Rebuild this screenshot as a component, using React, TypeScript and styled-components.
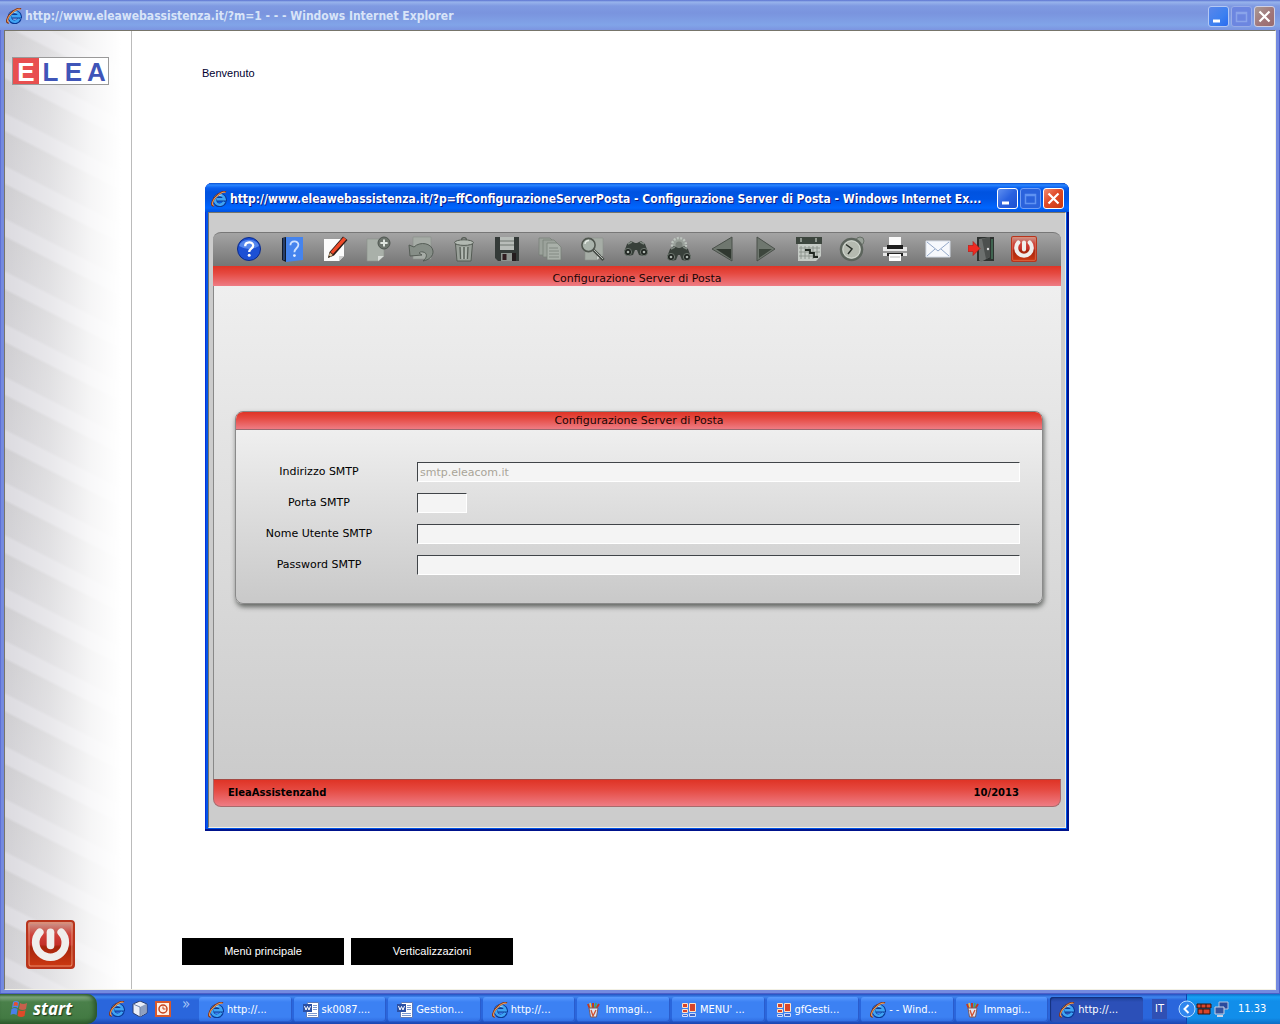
import React from "react";
import styled, { createGlobalStyle, css } from "styled-components";

const Global = createGlobalStyle`
  * { box-sizing: border-box; }
  html, body { margin: 0; padding: 0; }
  button, input { font: inherit; margin: 0; }
`;

const verdana = `Verdana, "DejaVu Sans", sans-serif`;
const arial = `Arial, "Liberation Sans", sans-serif`;
const tahoma = `Tahoma, "DejaVu Sans Condensed", "DejaVu Sans", sans-serif`;
const trebuchet = `"Trebuchet MS", "Noto Sans", sans-serif`;
const caption = `"Trebuchet MS", "DejaVu Sans Condensed", sans-serif`;

const Desktop = styled.div`
  position: relative;
  display: flex;
  flex-direction: column;
  min-height: 100vh;
  background: #fff;
`;

/* ---------- window frame ---------- */

const Frame = styled.section<{ $active?: boolean }>`
  display: flex;
  flex-direction: column;
  overflow: hidden;
  ${(p) =>
    p.$active
      ? css`
          position: absolute;
          top: 183px;
          bottom: 193px;
          left: 205px;
          right: 211px;
          border-radius: 7px 7px 0 0;
          background: #0053e8;
          padding: 0 3px 3px;
          box-shadow: inset -1px -1px 0 1px #00138c, inset 1px 0 0 #0831d9;
        `
      : css`
          flex: 1;
          background: #748ae0;
          padding: 0 4px 4px;
          box-shadow: inset -1px -1px 0 #4e5fc8, inset 1px 0 0 #5e70d4;
        `}
`;

const TitleBar = styled.header<{ $active?: boolean }>`
  display: flex;
  align-items: center;
  flex: none;
  gap: 3px;
  height: ${(p) => (p.$active ? 29 : 30)}px;
  margin: ${(p) => (p.$active ? "0 -3px" : "0 -4px")};
  padding: 2px 5px 0 6px;
  color: ${(p) => (p.$active ? "#fff" : "#d8e4f8")};
  text-shadow: ${(p) => (p.$active ? "1px 1px 0 #0a1883" : "none")};
  background: ${(p) =>
    p.$active
      ? "linear-gradient(#0a4fd0 0, #2a86ff 2px, #0a5fee 5px, #0053e0 9px, #0055e5 16px, #0066ff 25px, #0050dd 29px)"
      : "linear-gradient(#5a72d0 0, #98b4ec 2px, #7f9ae2 6px, #7a94de 13px, #81a4e8 25px, #7c94e0 30px)"};
`;

const Title = styled.h1`
  flex: 1;
  min-width: 0;
  margin: 0;
  overflow: hidden;
  white-space: nowrap;
  font: bold 12px/18px ${caption};
`;

const Controls = styled.div`
  display: flex;
  gap: 2px;
`;

const ControlButton = styled.button<{ $bg: string; $edge: string }>`
  display: block;
  width: 21px;
  height: 21px;
  padding: 0;
  border: 1px solid ${(p) => p.$edge};
  border-radius: 3px;
  background: ${(p) => p.$bg};
  svg { display: block; }
`;

const Viewport = styled.div<{ $active?: boolean }>`
  flex: 1;
  min-height: 0;
  display: flex;
  flex-direction: ${(p) => (p.$active ? "column" : "row")};
  border: 1px solid;
  border-color: #77756a #f2f0e4 #f2f0e4 #77756a;
  background: ${(p) => (p.$active ? "#ccc" : "#fff")};
`;

/* ---------- page behind ---------- */

const Sidebar = styled.aside`
  display: flex;
  flex-direction: column;
  justify-content: space-between;
  flex: none;
  width: 127px;
  padding: 26px 0 20px 7px;
  border-right: 1px solid #bbb;
  background:
    linear-gradient(to right, rgba(255, 255, 255, 0) 0, rgba(255, 255, 255, 0.35) 35%, rgba(255, 255, 255, 0.8) 68%, #fff 92%),
    repeating-linear-gradient(207deg, #dcdbe0 0, #dcdbe0 4px, #cfced1 7px, #d2d1d5 35px, #dcdbe0 38px, #dcdbe0 47px);
`;

const Logo = styled.div`
  display: flex;
  width: 97px;
  height: 28px;
  border: 1px solid #999;
  background: #fff;
  color: #3f55b8;
  font: bold 26px/28px ${arial};
`;

const LogoLetter = styled.span<{ $hot?: boolean }>`
  flex: 1;
  text-align: center;
  ${(p) => p.$hot && "background: #e84f4f; color: #fff; flex: 0 0 26px;"}
`;

const PlainButton = styled.button`
  display: block;
  padding: 0;
  border: 0;
  background: none;
  svg { display: block; }
`;

const SideAction = styled.div`
  padding-left: 14px;
`;

const Page = styled.main`
  display: flex;
  flex: 1;
  flex-direction: column;
  justify-content: space-between;
  padding: 34px 50px 24px;
`;

const Welcome = styled.p`
  margin: 0 20px;
  color: #000030;
  font: 11px/16px ${arial};
`;

const PageNav = styled.nav`
  display: flex;
  gap: 7px;
`;

const NavButton = styled.button`
  width: 162px;
  height: 27px;
  padding: 0;
  border: 0;
  background: #000;
  color: #fff;
  && { font: 11px/27px ${arial}; }
`;

/* ---------- dialog ---------- */

const Panel = styled.div`
  display: flex;
  flex: 1;
  flex-direction: column;
  margin: 19px 4px 20px;
  color: #1a0505;
  font: 10px/18px ${verdana};
`;

const Toolbar = styled.div`
  display: flex;
  align-items: center;
  justify-content: space-between;
  flex: none;
  height: 34px;
  padding: 0 24px 2px 23px;
  border-top: 1px solid #777;
  border-radius: 8px 8px 0 0;
  background: linear-gradient(#a4a4a4, #757575);
`;

const redFill = "linear-gradient(#df3426 0, #e5483f 35%, #ee7c84 100%)";

const PanelTitle = styled.h2`
  flex: none;
  margin: 0;
  padding-top: 4px;
  height: 20px;
  text-align: center;
  font: 11px/17px ${verdana};
  background: ${redFill};
`;

const PanelBody = styled.div`
  flex: 1;
  display: flex;
  flex-direction: column;
  justify-content: center;
  padding: 0 18px 50px 21px;
  border-left: 1px solid #888;
  background: linear-gradient(#efefef, #cbcbcb);
`;

const Footer = styled.footer`
  display: flex;
  justify-content: space-between;
  flex: none;
  height: 28px;
  padding: 0 41px 0 14px;
  border: 1px solid #a86a6c;
  border-top-color: #a44a44;
  border-radius: 0 0 8px 8px;
  color: #000;
  font: bold 10px/26px ${verdana};
  background: ${redFill};
`;

const Card = styled.form`
  border: 1px solid #8a8a8a;
  border-radius: 8px;
  overflow: hidden;
  background: linear-gradient(#efefef 18px, #c9c9c9);
  box-shadow: 1px 3px 5px rgba(60, 64, 60, 0.75);
`;

const CardTitle = styled.h3`
  height: 18px;
  margin: 0;
  border-bottom: 1px solid #9a6a70;
  text-align: center;
  font: 11px/17px ${verdana};
  background: ${redFill};
`;

const Fields = styled.div`
  display: grid;
  grid-template-columns: 166px 1fr;
  row-gap: 11px;
  column-gap: 15px;
  padding: 32px 22px 28px 0;
`;

const FieldLabel = styled.label`
  text-align: center;
  color: #000;
  font: 11px/20px ${verdana};
`;

const FieldInput = styled.input<{ $short?: boolean }>`
  width: ${(p) => (p.$short ? "50px" : "100%")};
  height: 20px;
  padding: 0 2px;
  border: 1px solid;
  border-color: #404448 #fff #fff #404448;
  border-radius: 0;
  outline: 0;
  background: #f4f4f4;
  color: #a9a598;
  && { font: 11px/18px ${verdana}; }
`;

/* ---------- taskbar ---------- */

const Taskbar = styled.footer`
  display: flex;
  flex: none;
  height: 30px;
  color: #fff;
  font: 11px/20px ${tahoma};
  background: linear-gradient(#2450c0 0, #3f86ee 3px, #2a66dc 6px, #2a66dc 24px, #1b45b0 30px);
`;

const StartButton = styled.button`
  display: flex;
  align-items: center;
  gap: 5px;
  width: 97px;
  padding: 0 0 0 10px;
  border: 0;
  border-radius: 0 10px 10px 0;
  color: #fff;
  text-shadow: 1px 1px 1px #1d3a1d;
  background: linear-gradient(#3b6f3b 0, #7fa77f 3px, #4a804a 8px, #437a43 24px, #2e5e2e 30px);
  box-shadow: inset -3px 0 4px #2b552b;
  && { font: italic bold 17px/28px ${trebuchet}; }
`;

const QuickLaunch = styled.div`
  display: flex;
  align-items: center;
  gap: 7px;
  flex: none;
  width: 102px;
  padding-left: 12px;
`;

const More = styled.span`
  align-self: flex-start;
  margin-left: 4px;
  color: #a9c6f6;
  font-size: 15px;
`;

const Tasks = styled.div`
  display: flex;
  flex: 1;
  min-width: 0;
  gap: 2px;
  padding: 3px 0 2px;
`;

const Task = styled.button<{ $on?: boolean }>`
  display: flex;
  flex: 1 1 0;
  align-items: center;
  gap: 3px;
  min-width: 0;
  padding: 0 0 0 9px;
  border: 0;
  border-radius: 3px;
  color: #fff;
  white-space: nowrap;
  overflow: hidden;
  background: ${(p) =>
    p.$on ? "linear-gradient(#1c3f94, #2c50b8 5px, #2c50b8)" : "linear-gradient(#5a9bff, #3c81f3 5px, #3c81f3 20px, #2f6ce0)"};
  box-shadow: ${(p) => (p.$on ? "inset 1px 1px 1px #14307c" : "inset -1px -1px 0 #2a5ccc")};
  svg { flex: none; }
`;

const Language = styled.span`
  align-self: center;
  width: 15px;
  margin: 0 19px 0 9px;
  text-align: center;
  background: #3050b4;
`;

const Tray = styled.div`
  display: flex;
  align-items: center;
  flex: none;
  width: 94px;
  border-left: 1px solid #1042af;
  background: linear-gradient(#0d6fc8 0, #18a0f4 3px, #118eea 7px, #118eea 24px, #0d6cc4 30px);
`;

const TrayToggle = styled(PlainButton)`
  margin-left: -9px;
`;

const Clock = styled.time`
  margin-left: 8px;
`;

/* ---------- drawings ---------- */

const IELogo = ({ size = 16 }: { size?: number }) => (
  <svg width={size} height={size} viewBox="0 0 16 16" aria-hidden="true">
    <path d="M13.6 10.8A5 5 0 1 1 13.8 8.3H5.6" fill="none" stroke="#0a3a96" strokeWidth="4.2" />
    <path d="M13.2 10.8A4.9 4.9 0 1 1 13.6 8.3H5.6" fill="none" stroke="#3fa4f4" strokeWidth="2.6" />
    <path d="M5.5 6.2a4.5 4.5 0 0 1 5-2" fill="none" stroke="#a8dcff" strokeWidth="1" />
    <path d="M2.8 14.6C-.4 15.4.6 9.6 5.2 5.2 9 1.4 13.6-.2 14.6 1.4" fill="none" stroke="#8a3a1c" strokeWidth="2" />
    <path d="M2.8 14.2C.4 14.6 1.4 9.4 5.4 5.6 9 2 13 .4 14.4 1.6" fill="none" stroke="#f4b070" strokeWidth="1" />
  </svg>
);

const PowerIcon = ({ size }: { size: number }) => (
  <svg width={size} height={size} viewBox="0 0 48 48" aria-hidden="true">
    <defs>
      <linearGradient id="pw" x1="0" y1="0" x2="0" y2="1">
        <stop offset="0" stopColor="#c9a095" />
        <stop offset=".3" stopColor="#cf4038" />
        <stop offset=".5" stopColor="#c4302a" />
        <stop offset=".55" stopColor="#a5240c" />
        <stop offset="1" stopColor="#cf3a12" />
      </linearGradient>
    </defs>
    <rect x="1" y="1" width="46" height="46" rx="3" fill="url(#pw)" stroke="#b8341c" strokeWidth="2" />
    <rect x="3" y="3" width="42" height="42" rx="2" fill="none" stroke="#e58a6c" />
    <path d="M13.5 12a14.5 14.5 0 1 0 21 0" fill="none" stroke="#f0eeec" strokeWidth="7.5" strokeLinecap="round" />
    <path d="M24 12v13" stroke="#f0eeec" strokeWidth="7.5" strokeLinecap="round" />
  </svg>
);

const Sheet = ({ fill = "#aeb5ae" }: { fill?: string }) => (
  <>
    <path d="M5 2h18v17l-6 5H5z" fill={fill} stroke="#8b928b" strokeWidth=".6" />
    <path d="M17 24v-5h6z" fill="#dfe3df" stroke="#8b928b" strokeWidth=".5" />
  </>
);

const binoculars = (
  <g>
    <path d="M1 17l3-8 4-3 4 2h2l4-2 4 3 3 8-4 4-5-1-2-5h-2l-2 5-5 1z" fill="#38403a" />
    <path d="M5 9l4-2M17 7l4 2" stroke="#7d867f" strokeWidth="1.5" />
    <circle cx="5" cy="17" r="3.6" fill="#1f2420" stroke="#6f7871" />
    <circle cx="21" cy="17" r="3.6" fill="#1f2420" stroke="#6f7871" />
    <circle cx="5" cy="17" r="1.3" fill="#aab3ac" />
    <circle cx="21" cy="17" r="1.3" fill="#aab3ac" />
  </g>
);

const tools: { name: string; art: React.ReactNode }[] = [
  {
    name: "Aiuto",
    art: (
      <>
        <circle cx="13" cy="13" r="11.5" fill="#1c50d4" stroke="#0b2a8a" />
        <path d="M3 10a10.5 9 0 0 1 20 0q-10 6-20 0z" fill="#6c9cf6" opacity=".7" />
        <path d="M9.2 10.2c0-5 8-5 8-.6 0 3.2-4 3-4 6.4" fill="none" stroke="#fff" strokeWidth="2.3" />
        <circle cx="13.2" cy="19.2" r="1.5" fill="#fff" />
      </>
    ),
  },
  {
    name: "Manuale",
    art: (
      <>
        <path d="M3 2l4-1v25l-4-2z" fill="#101828" />
        <path d="M7 1h17v23L7 26z" fill="#4584ee" />
        <path d="M5 2v22" stroke="#3c64b0" />
        <path d="M11.4 9.2c.2-5 8-5 8-.4 0 3.4-4 3.6-4 7.4" fill="none" stroke="#cfe2ff" strokeWidth="1.8" />
        <circle cx="15.4" cy="19.6" r="1.4" fill="#e4efff" />
      </>
    ),
  },
  {
    name: "Modifica",
    art: (
      <>
        <path d="M2 3h20v17l-5 5H2z" fill="#fbfbfb" />
        <path d="M17 25v-5h5z" fill="#cfcfcf" />
        <path d="M6 22l1.500-6L21 .5l4.500 3.500L12 19.500z" fill="#2c1a16" />
        <path d="M8.5 16L21.500 1.200l2.800 2.200L11 18z" fill="#f04a28" />
        <path d="M6 22l2-5.4 2.8 2.3z" fill="#e6c08c" />
        <path d="M6 22l1-2.6 1.2 1z" fill="#111" />
      </>
    ),
  },
  {
    name: "Nuovo",
    art: (
      <>
        <path d="M2 3h17v17l-5 5H2z" fill="#a9b0a9" stroke="#8b928b" strokeWidth=".6" />
        <path d="M13 25v-5h6z" fill="#d9ddd9" />
        <circle cx="19" cy="7" r="6" fill="#6c746d" stroke="#4f5650" />
        <path d="M19 3.4v7.2M15.4 7h7.2" stroke="#dfe5df" strokeWidth="2" />
      </>
    ),
  },
  {
    name: "Annulla",
    art: (
      <>
        <path d="M5 1h18v22H5z" fill="#a6aca6" stroke="#8b928b" strokeWidth=".6" />
        <path
          d="M1 9l5 2c6-6 18-4 19 4 .5 5-4 9-10 10 4-3 5-8 0-9-2-.5-3 0-4 1l3 2-12 1z"
          fill="#868e87"
          stroke="#505851"
          strokeWidth=".9"
        />
      </>
    ),
  },
  {
    name: "Elimina",
    art: (
      <>
        <path d="M4.5 8h17L20 25H6z" fill="#9aa19a" stroke="#555c55" />
        <path d="M9 11l.6 12M13 11v12M17 11l-.6 12" stroke="#5a615a" strokeWidth="1.3" />
        <path d="M11 11l.2 12M15 11l-.2 12" stroke="#c3cac3" />
        <ellipse cx="13" cy="6.6" rx="9.4" ry="2.8" fill="#b2b9b2" stroke="#555c55" />
        <path d="M10.5 4q0-2.4 2.5-2.4T15.5 4" fill="none" stroke="#555c55" strokeWidth="1.2" />
      </>
    ),
  },
  {
    name: "Salva",
    art: (
      <>
        <path d="M1 1h24v24H4l-3-3z" fill="#343a38" />
        <path d="M6 1h14v13H6z" fill="#b8bdb9" />
        <path d="M6 5h14M6 9h14" stroke="#6f7671" />
        <path d="M7 17h12v8H7z" fill="#8f9591" />
        <path d="M8.5 18h4v6h-4z" fill="#301c20" />
        <path d="M18 17h4v8h-4z" fill="#241c1e" />
      </>
    ),
  },
  {
    name: "Copia",
    art: (
      <g fill="#9ba29b" stroke="#7a817a" strokeWidth=".8">
        <path d="M2 2h11l3 3v14H2z" />
        <path d="M6 4h11l3 3v14H6z" />
        <path d="M10 7h10l4 4v13H10z" fill="#a9b0a9" />
        <path d="M12 12h9M12 15h10M12 18h10M12 21h10" />
      </g>
    ),
  },
  {
    name: "Anteprima",
    art: (
      <>
        <Sheet fill="#a6ada6" />
        <circle cx="8.5" cy="9" r="6.6" fill="#aab4ac" stroke="#50564f" strokeWidth="1.6" />
        <path d="M5 8a4 4 0 0 1 4-3.5" fill="none" stroke="#e6ece6" strokeWidth="1.4" />
        <path d="M13.5 14l10 10" stroke="#474d47" strokeWidth="3" />
        <path d="M14 14l9 9" stroke="#b5bbb5" />
      </>
    ),
  },
  { name: "Cerca", art: <g transform="translate(0 -1)">{binoculars}</g> },
  {
    name: "Ricerca avanzata",
    art: (
      <>
        <circle cx="13" cy="9" r="7" fill="#9aa19b" stroke="#bcc3bd" strokeWidth="2.4" strokeDasharray="2 1.4" />
        <circle cx="13" cy="9" r="3.5" fill="#7b827c" />
        <g transform="translate(0 4)">{binoculars}</g>
      </>
    ),
  },
  {
    name: "Precedente",
    art: (
      <>
        <path d="M2 13L22 1v24z" fill="#6f776f" stroke="#4a504a" />
        <path d="M6 13h15v10z" fill="#303830" />
      </>
    ),
  },
  {
    name: "Successivo",
    art: (
      <>
        <path d="M22 13L4 1v24z" fill="#6f776f" stroke="#4a504a" />
        <path d="M19 13H6v9z" fill="#3d463d" />
      </>
    ),
  },
  {
    name: "Calendario",
    art: (
      <>
        <path d="M0 1h26v7H0z" fill="#3d463e" />
        <path d="M5 2v4M20 2v4" stroke="#a9b0a9" strokeWidth="1.5" />
        <path d="M2 8h23v12l-5 5H2z" fill="#c5cac5" />
        <path d="M5 10v13M9 10v13M13 10v13M17 10v13M21 10v10M3 12h21M3 16h21M3 20h19" stroke="#8a918a" strokeWidth=".9" />
        <path d="M9 14h5v3h4v4h4" fill="none" stroke="#202620" strokeWidth="1.8" />
      </>
    ),
  },
  {
    name: "Orologio",
    art: (
      <>
        <circle cx="21" cy="5" r="4" fill="#98a098" stroke="#687068" />
        <circle cx="12.5" cy="13.5" r="10.6" fill="#a7aea5" stroke="#5c645c" strokeWidth="2.4" />
        <circle cx="12.5" cy="13.5" r="8.6" fill="#b5bab0" stroke="#d5dad2" />
        <path d="M7 8.5l6 4.5-4 5" fill="none" stroke="#2a302a" strokeWidth="1.5" />
      </>
    ),
  },
  {
    name: "Stampa",
    art: (
      <>
        <path d="M7 1h12v10H7z" fill="#fafafa" />
        <path d="M1 11h24v9H1z" fill="#e6e6e6" />
        <path d="M5 9h16v4H5z" fill="#1c1c1c" />
        <path d="M1 15h24v2H1z" fill="#9a9a9a" />
        <path d="M5 17h16v3H5z" fill="#222" />
        <path d="M7 18h12v7H7z" fill="#fff" />
        <path d="M8 21h10" stroke="#bbb" />
      </>
    ),
  },
  {
    name: "Posta",
    art: (
      <>
        <path d="M1 5h24v16H1z" fill="#f6f8fc" stroke="#d4dbe6" />
        <path d="M2 6l11 9 11-9M2 20l8-7M24 20l-8-7" fill="none" stroke="#93a8c8" />
      </>
    ),
  },
  {
    name: "Uscita",
    art: (
      <>
        <path d="M9 1h17v24H9z" fill="#2e3230" />
        <path d="M11 3l11-2v20l-9 5-2-2z" fill="#6c706e" />
        <path d="M14 3l8-2v20l-4 2z" fill="#4c504e" />
        <path d="M23 3h2v20h-2z" fill="#3f6450" />
        <circle cx="20" cy="13" r="1.2" fill="#ddd" />
        <path d="M0 9.500h5V5.500l7 7-7 7v-4H0z" fill="#ee2a22" stroke="#b01810" strokeWidth=".6" />
      </>
    ),
  },
];

const ToolButton = ({ name, children }: { name: string; children: React.ReactNode }) => (
  <PlainButton type="button" aria-label={name}>
    {children}
  </PlainButton>
);

const Word = () => (
  <svg width="16" height="16" viewBox="0 0 16 16" aria-hidden="true">
    <path d="M4.500.5h11v15h-12V5z" fill="#fff" stroke="#5d7ab8" />
    <path d="M10 3.5h4M10 5.5h4M10 7.5h4M5 11.5h9M5 13.5h9" stroke="#7b98d0" />
    <path d="M0 2h9v8H0z" fill="#2b50a4" />
    <path d="M1.5 4L3 8l1.5-3.5L6 8l1.5-4" fill="none" stroke="#fff" />
  </svg>
);

const Paint = () => (
  <svg width="16" height="16" viewBox="0 0 16 16" aria-hidden="true">
    <path d="M4 7L2 2M7 7V1M10 7l3-5" stroke="#c33a20" strokeWidth="2" />
    <path d="M5 6L4 1" stroke="#f3c44a" strokeWidth="1.5" />
    <path d="M9 6l1-5" stroke="#4fae4a" strokeWidth="1.5" />
    <path d="M3 6h9l-1.5 9h-6z" fill="#dfe6f2" stroke="#7a5a60" />
    <path d="M5 8l2 6 3-6" fill="none" stroke="#d05030" strokeWidth="1.3" />
  </svg>
);

const FormApp = () => (
  <svg width="16" height="16" viewBox="0 0 16 16" aria-hidden="true">
    <path d="M1.5 1.5h5v4h-5zM1.5 7.5h5v3h-5z" fill="#d8452a" stroke="#ffe2c8" />
    <path d="M8.5 1.5h6v8h-6z" fill="#d8452a" stroke="#ffe2c8" />
    <path d="M1.5 12.5h5v2h-5zM8.5 11.5h6v3h-6z" fill="#3d67cf" stroke="#cfdcf8" />
  </svg>
);

const taskIcons = { ie: <IELogo />, word: <Word />, paint: <Paint />, form: <FormApp /> };

const tasks: { icon: keyof typeof taskIcons; text: string }[] = [
  { icon: "ie", text: "http://..." },
  { icon: "word", text: "sk0087...." },
  { icon: "word", text: "Gestion..." },
  { icon: "ie", text: "http://..." },
  { icon: "paint", text: "Immagi..." },
  { icon: "form", text: "MENU' ..." },
  { icon: "form", text: "gfGesti..." },
  { icon: "ie", text: "- - Wind..." },
  { icon: "paint", text: "Immagi..." },
  { icon: "ie", text: "http://..." },
];

const WindowControls = ({ active }: { active?: boolean }) => (
  <Controls>
    <ControlButton
      type="button"
      aria-label="Riduci a icona"
      $edge={active ? "#fff" : "#b4c8f4"}
      $bg={active ? "linear-gradient(135deg, #5f8ff0, #2a62e0 50%, #1c50d0)" : "linear-gradient(135deg, #5a86ea, #3c80f0 60%, #2a6af0)"}
    >
      <svg width="19" height="19"><path d="M4 14h7" stroke="#fff" strokeWidth="3" /></svg>
    </ControlButton>
    <ControlButton
      type="button"
      aria-label="Ingrandisci"
      disabled
      $edge={active ? "#6f9cf4" : "#98ace8"}
      $bg={active ? "#2a62dc" : "#6c86e0"}
    >
      <svg width="19" height="19">
        <path d="M4.5 5.5h10v9h-10zM4 6.5h11" fill="none" stroke={active ? "#5f92f2" : "#8aa4ea"} strokeWidth="1.5" />
      </svg>
    </ControlButton>
    <ControlButton
      type="button"
      aria-label="Chiudi"
      $edge={active ? "#fff" : "#d0d0e4"}
      $bg={active ? "linear-gradient(135deg, #f08a70, #e04a28 45%, #c8380f)" : "linear-gradient(135deg, #a89a94, #a07478 60%, #986c70)"}
    >
      <svg width="19" height="19"><path d="M4.5 4.5l10 10M14.5 4.5l-10 10" stroke="#fff" strokeWidth="2.2" /></svg>
    </ControlButton>
  </Controls>
);

const fields = [
  { id: "smtp-host", label: "Indirizzo SMTP", value: "smtp.eleacom.it", type: "text" },
  { id: "smtp-port", label: "Porta SMTP", value: "", type: "text", short: true },
  { id: "smtp-user", label: "Nome Utente SMTP", value: "", type: "text" },
  { id: "smtp-pass", label: "Password SMTP", value: "", type: "password" },
];

export default function App() {
  return (
    <>
      <Global />
      <Desktop>
        <Frame>
          <TitleBar>
            <IELogo />
            <Title>http://www.eleawebassistenza.it/?m=1 - - - Windows Internet Explorer</Title>
            <WindowControls />
          </TitleBar>
          <Viewport>
            <Sidebar>
              <Logo>
                <LogoLetter $hot>E</LogoLetter>
                <LogoLetter>L</LogoLetter>
                <LogoLetter>E</LogoLetter>
                <LogoLetter>A</LogoLetter>
              </Logo>
              <SideAction>
                <ToolButton name="Chiudi sessione">
                  <PowerIcon size={49} />
                </ToolButton>
              </SideAction>
            </Sidebar>
            <Page>
              <Welcome>Benvenuto</Welcome>
              <PageNav>
                <NavButton type="button">Menù principale</NavButton>
                <NavButton type="button">Verticalizzazioni</NavButton>
              </PageNav>
            </Page>
          </Viewport>
        </Frame>

        <Taskbar>
          <StartButton type="button">
            <svg width="18" height="18" viewBox="0 0 18 18" aria-hidden="true">
              <path d="M3 2q3-2 6 0L8 8Q5 6 2 8z" fill="#4f86ee" />
              <path d="M10 3q3 2 7 0l-1 6q-3 2-7 0z" fill="#c8604c" />
              <path d="M1.5 9q3-2 6 0l-1 6q-3-2-6 0z" fill="#4a80ea" />
              <path d="M8.5 10q3 2 7 0l-1 6q-3 2-7 0z" fill="#e04a28" />
              <path d="M4 2.5q2-1 4 .5l-.5 3q-2-1-4 0z" fill="#e8502c" />
            </svg>
            start
          </StartButton>
          <QuickLaunch>
            <IELogo />
            <svg width="16" height="16" viewBox="0 0 16 16" aria-hidden="true">
              <path d="M8 0l7 3v9l-7 4-7-4V3z" fill="#e9eef8" stroke="#2c3f70" />
              <path d="M8 6l6-3v9l-6 3.5z" fill="#8ea0c0" />
              <path d="M1 3l7 3v9" fill="none" stroke="#6f82a8" />
            </svg>
            <svg width="16" height="16" viewBox="0 0 16 16" aria-hidden="true">
              <path d="M1 1h14v14H1z" fill="#fff0e4" stroke="#d8592c" strokeWidth="2" />
              <circle cx="8" cy="8" r="4" fill="none" stroke="#c8441c" strokeWidth="1.5" />
              <path d="M8 5.5V8h2.5" fill="none" stroke="#c8441c" />
            </svg>
            <More>»</More>
          </QuickLaunch>
          <Tasks>
            {tasks.map((t, i) => (
              <Task type="button" key={i} $on={i === tasks.length - 1}>
                {taskIcons[t.icon]}
                {t.text}
              </Task>
            ))}
          </Tasks>
          <Language>IT</Language>
          <Tray>
            <TrayToggle type="button" aria-label="Mostra icone nascoste">
              <svg width="18" height="18" viewBox="0 0 18 18">
                <circle cx="9" cy="9" r="8" fill="#2f86ee" stroke="#b8dcff" />
                <path d="M10.5 5l-4 4 4 4" fill="none" stroke="#fff" strokeWidth="2" />
              </svg>
            </TrayToggle>
            <svg width="16" height="16" viewBox="0 0 16 16" aria-hidden="true">
              <path d="M1 3h14v4H1zM2 8h12v5H2z" fill="#d8452a" stroke="#2a1410" />
              <path d="M5 3v4M10 3v4M7 8v5" stroke="#2a1410" />
            </svg>
            <svg width="18" height="16" viewBox="0 0 18 16" aria-hidden="true">
              <path d="M7 1h9v7H7z" fill="#2a4a9c" stroke="#b8c4dc" />
              <path d="M3 6h9v7H3z" fill="#34549f" stroke="#c8d2e4" />
              <path d="M5 15h6" stroke="#c8d2e4" strokeWidth="2" />
            </svg>
            <Clock>11.33</Clock>
          </Tray>
        </Taskbar>

        <Frame $active role="dialog" aria-label="Configurazione Server di Posta">
          <TitleBar $active>
            <IELogo />
            <Title>
              http://www.eleawebassistenza.it/?p=ffConfigurazioneServerPosta - Configurazione Server di Posta - Windows
              Internet Ex...
            </Title>
            <WindowControls active />
          </TitleBar>
          <Viewport $active>
            <Panel>
              <Toolbar>
                {tools.map((t) => (
                  <ToolButton key={t.name} name={t.name}>
                    <svg width="26" height="26" viewBox="0 0 26 26" aria-hidden="true">
                      {t.art}
                    </svg>
                  </ToolButton>
                ))}
                <ToolButton name="Spegni">
                  <PowerIcon size={26} />
                </ToolButton>
              </Toolbar>
              <PanelTitle>Configurazione Server di Posta</PanelTitle>
              <PanelBody>
                <Card>
                  <CardTitle>Configurazione Server di Posta</CardTitle>
                  <Fields>
                    {fields.map((f) => (
                      <React.Fragment key={f.id}>
                        <FieldLabel htmlFor={f.id}>{f.label}</FieldLabel>
                        <FieldInput id={f.id} type={f.type} defaultValue={f.value} $short={f.short} />
                      </React.Fragment>
                    ))}
                  </Fields>
                </Card>
              </PanelBody>
              <Footer>
                <span>EleaAssistenzahd</span>
                <span>10/2013</span>
              </Footer>
            </Panel>
          </Viewport>
        </Frame>
      </Desktop>
    </>
  );
}
